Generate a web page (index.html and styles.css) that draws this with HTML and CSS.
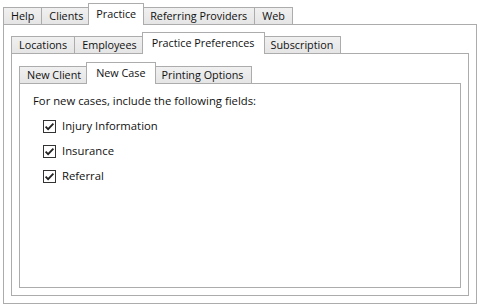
FILE: index.html
```html
<!DOCTYPE html>
<html>
<head>
<meta charset="utf-8">
<link rel="stylesheet" href="styles.css">
</head>
<body>
<div class="tabctl outer">
  <div class="strip">
    <div class="tab">Help</div>
    <div class="tab">Clients</div>
    <div class="tab sel">Practice</div>
    <div class="tab">Referring Providers</div>
    <div class="tab">Web</div>
  </div>
  <div class="panel">
    <div class="tabctl mid">
      <div class="strip">
        <div class="tab">Locations</div>
        <div class="tab">Employees</div>
        <div class="tab sel">Practice Preferences</div>
        <div class="tab">Subscription</div>
      </div>
      <div class="panel">
        <div class="tabctl inner">
          <div class="strip">
            <div class="tab">New Client</div>
            <div class="tab sel">New Case</div>
            <div class="tab">Printing Options</div>
          </div>
          <div class="panel content">
            <div class="intro">For new cases, include the following fields:</div>
            <div class="checks">
              <label class="check"><svg class="box" width="13" height="13" viewBox="0 0 13 13"><rect x="0.5" y="0.5" width="12" height="12" fill="#fff" stroke="#333"/><path d="M2.6 6.6 L5.1 9.1 L10.4 3.6" fill="none" stroke="#212121" stroke-width="1.8"/></svg><span>Injury Information</span></label>
              <label class="check"><svg class="box" width="13" height="13" viewBox="0 0 13 13"><rect x="0.5" y="0.5" width="12" height="12" fill="#fff" stroke="#333"/><path d="M2.6 6.6 L5.1 9.1 L10.4 3.6" fill="none" stroke="#212121" stroke-width="1.8"/></svg><span>Insurance</span></label>
              <label class="check"><svg class="box" width="13" height="13" viewBox="0 0 13 13"><rect x="0.5" y="0.5" width="12" height="12" fill="#fff" stroke="#333"/><path d="M2.6 6.6 L5.1 9.1 L10.4 3.6" fill="none" stroke="#212121" stroke-width="1.8"/></svg><span>Referral</span></label>
            </div>
          </div>
        </div>
      </div>
    </div>
  </div>
</div>
</body>
</html>
```
FILE: styles.css
```css
* { box-sizing: border-box; }
html, body { margin: 0; padding: 0; background: #fff; }
body {
  width: 480px;
  height: 308px;
  font-family: "Open Sans", "Noto Sans", sans-serif;
  font-size: 11.3px;
  color: #111;
  padding: 2px 3px 4px 3px;
}
.tabctl { display: flex; flex-direction: column; height: 100%; }
.strip {
  display: flex;
  align-items: flex-end;
  height: 22px;
  position: relative;
  z-index: 1;
}
.tab {
  height: 17px;
  line-height: 15px;
  padding: 0 7px;
  font-size: 10.8px;
  border: 1px solid #acacac;
  border-bottom: none;
  background: linear-gradient(#f0f0f0, #e5e5e5);
  margin-right: -1px;
  white-space: nowrap;
}
.tab.sel {
  height: 22px;
  line-height: 20px;
  background: #fff;
  margin: 0 -2px -1px -2px;
  padding: 0 9px;
  position: relative;
  z-index: 2;
}
.outer > .strip .tab.sel { padding: 0 7px; }
.panel {
  flex: 1;
  border: 1px solid #acacac;
  background: #fff;
  padding: 7px;
  min-height: 0;
}
.outer > .panel { padding: 6px 7px 7px 7px; }
.content { padding: 7px 13px; }
.intro { line-height: 16px; height: 16px; margin-top: 2px; }
.checks { display: flex; flex-direction: column; gap: 9px; padding-left: 10px; margin-top: 9px; }
.check { display: flex; align-items: center; gap: 6px; height: 16px; line-height: 16px; }
.box { flex: none; display: block; }
```
